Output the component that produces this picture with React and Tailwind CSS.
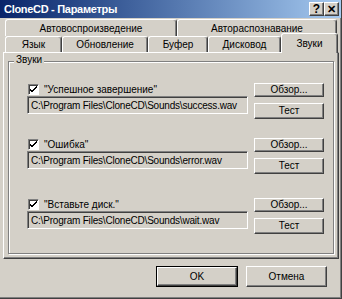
import React from "react";

const raised =
  "border border-t-white border-l-white border-r-[#404040] border-b-[#404040] shadow-[inset_-1px_-1px_0_#808080]";
const sunken =
  "border border-t-[#808080] border-l-[#808080] border-r-white border-b-white shadow-[inset_1px_1px_0_#404040]";

const sounds = [
  { label: "\"Успешное завершение\"", path: "C:\\Program Files\\CloneCD\\Sounds\\success.wav", gap: "mt-[21px]" },
  { label: "\"Ошибка\"", path: "C:\\Program Files\\CloneCD\\Sounds\\error.wav", gap: "mt-[19px]" },
  { label: "\"Вставьте диск.\"", path: "C:\\Program Files\\CloneCD\\Sounds\\wait.wav", gap: "mt-[24px]" },
];

const Check = () => (
  <span className={`${sunken} flex h-[11px] w-[11px] items-center justify-center bg-white`}>
    <svg width="7" height="7" viewBox="0 0 7 7">
      <path d="M0 3 L2 5 L7 0 M0 4 L2 6 L7 1" stroke="#000" strokeWidth="1" fill="none" />
    </svg>
  </span>
);

const Button = ({ children, className = "" }) => (
  <button className={`${raised} flex items-center justify-center bg-[#d4d0c8] leading-none ${className}`}>
    {children}
  </button>
);

const BackTab = ({ label, w }) => (
  <div
    className={`${w} flex h-[17px] items-center justify-center rounded-t-[3px] border-t border-l border-r border-t-white border-l-white border-r-[#404040] shadow-[inset_-1px_0_0_#808080]`}
  >
    {label}
  </div>
);

const FrontTab = ({ label, w, active }) =>
  active ? (
    <div
      className={`${w} relative z-10 -mt-[3px] -mb-[1px] flex h-[20px] items-start justify-center rounded-t-[3px] border-t border-l border-r border-t-white border-l-white border-r-[#404040] bg-[#d4d0c8] pt-[2px] shadow-[inset_-1px_0_0_#808080]`}
    >
      {label}
    </div>
  ) : (
    <div
      className={`${w} flex h-[16px] items-center justify-center rounded-t-[3px] border-t border-l border-r border-t-white border-l-white border-r-[#404040] bg-[#d4d0c8] shadow-[inset_-1px_0_0_#808080]`}
    >
      {label}
    </div>
  );

export default function App() {
  return (
    <div className="flex h-[299px] w-[342px] flex-col overflow-hidden border-r border-b border-r-[#404040] border-b-[#404040] bg-[#d4d0c8] font-['Liberation_Sans',sans-serif] text-[10px] text-black shadow-[inset_-1px_-1px_0_#808080]">
      {/* Title bar */}
      <div className="flex h-[18px] shrink-0 items-center justify-between bg-gradient-to-r from-[#0a246a] to-[#a6caf0] pl-[4px] pr-[2px]">
        <span className="text-[11px] font-bold tracking-[-0.3px] text-white">CloneCD - Параметры</span>
        <div className="flex">
          <Button className="h-[14px] w-[15px] text-[12px] font-bold">?</Button>
          <Button className="h-[14px] w-[15px] text-[11px] font-bold">✕</Button>
        </div>
      </div>

      <div className="flex flex-col pl-[3px] pr-[2px] pt-[1px]">
        {/* Tabs */}
        <div className="ml-[2px] flex">
          <BackTab label="Автовоспроизведение" w="w-[172px]" />
          <BackTab label="Автораспознавание" w="w-[160px]" />
        </div>
        <div className="ml-[2px] flex">
          <FrontTab label="Язык" w="w-[57px]" />
          <FrontTab label="Обновление" w="w-[86px]" />
          <FrontTab label="Буфер" w="w-[60px]" />
          <FrontTab label="Дисковод" w="w-[73px]" />
          <FrontTab label="Звуки" w="w-[57px]" active />
        </div>

        {/* Panel */}
        <div className="h-[207px] w-[336px] border border-t-white border-l-white border-r-[#404040] border-b-[#404040] pl-[4px] pt-[8px] shadow-[inset_-1px_-1px_0_#808080]">
          <div className="relative h-[193px] w-[326px] border border-[#808080] shadow-[1px_1px_0_white,inset_1px_1px_0_white]">
            <span className="absolute -top-[7px] left-[5px] bg-[#d4d0c8] px-[2px] leading-none">Звуки</span>
            <div className="flex flex-col pl-[18px]">
              {sounds.map((s) => (
                <div key={s.path} className={`${s.gap} flex gap-[6px]`}>
                  <div className="flex w-[221px] flex-col">
                    <div className="flex h-[12px] items-center gap-[5px] pl-[1px]">
                      <Check />
                      <span>{s.label}</span>
                    </div>
                    <div className={`${sunken} mt-[1px] flex h-[18px] items-center overflow-hidden whitespace-nowrap bg-[#d4d0c8] pl-[3px] tracking-[-0.2px]`}>
                      {s.path}
                    </div>
                  </div>
                  <div className="flex flex-col">
                    <Button className="h-[14px] w-[70px]">Обзор...</Button>
                    <Button className="mt-[6px] h-[16px] w-[70px]">Тест</Button>
                  </div>
                </div>
              ))}
            </div>
          </div>
        </div>

        {/* Footer buttons */}
        <div className="mt-[7px] flex justify-end gap-[8px] pr-[12px]">
          <div className="border border-black">
            <Button className="h-[19px] w-[80px]">OK</Button>
          </div>
          <Button className="h-[21px] w-[81px]">Отмена</Button>
        </div>
      </div>
    </div>
  );
}
